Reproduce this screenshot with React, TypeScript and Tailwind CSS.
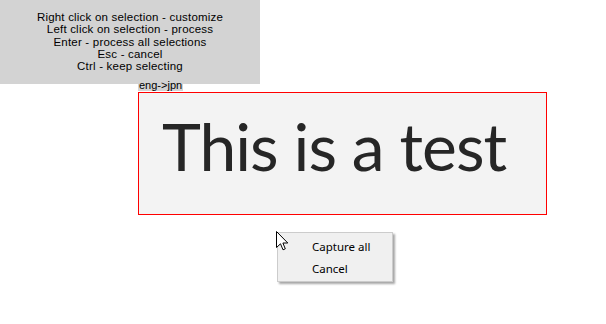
export default function App() {
  const hints = [
    "Right click on selection - customize",
    "Left click on selection - process",
    "Enter - process all selections",
    "Esc - cancel",
    "Ctrl - keep selecting",
  ];

  return (
    <div className="relative w-[606px] h-[324px] bg-white overflow-hidden">
      {/* Hint panel */}
      <div className="w-[260px] h-[84px] bg-[#d3d3d3] pt-[11px] text-center text-[11.5px] leading-[12.3px] tracking-[0.2px] text-black font-['Liberation_Sans',sans-serif]">
        {hints.map((h) => (
          <div key={h}>{h}</div>
        ))}
      </div>

      {/* Selection */}
      <div className="ml-[138px] mt-[8px] w-[409px] h-[123px] border border-[#ff0000] bg-[#f3f3f3] pl-[23px] pt-[19px]">
        <div className="text-[66px] leading-[68px] tracking-[-1px] text-[#262626] font-['Lato',sans-serif] whitespace-nowrap">
          This is a test
        </div>
      </div>

      {/* Language label */}
      <div className="absolute left-[138px] top-[80px] h-[11px] px-[1px] bg-[#d3d3d3] text-[11px] leading-[11px] text-black font-['Liberation_Sans',sans-serif]">
        eng-&gt;jpn
      </div>

      {/* Context menu */}
      <div className="absolute left-[277px] top-[232px] w-[116px] h-[50px] bg-[#f0f0f0] border border-[#cccccc] shadow-[2px_2px_2px_rgba(0,0,0,0.35)] pt-[3px] text-[11.5px] text-black font-['Noto_Sans',sans-serif]">
        <div className="h-[22px] pl-[34px] flex items-center">Capture all</div>
        <div className="h-[22px] pl-[34px] flex items-center">Cancel</div>
      </div>

      {/* Cursor */}
      <svg
        className="absolute left-[276px] top-[231px]"
        width="13"
        height="20"
        viewBox="0 0 13 20"
      >
        <path
          d="M0.5 0.5 L0.5 16.5 L4.5 12.8 L7 18.8 L9.3 17.8 L6.9 12 L11.8 12 Z"
          fill="#ffffff"
          stroke="#000000"
          strokeWidth="1"
          strokeLinejoin="miter"
        />
      </svg>
    </div>
  );
}
